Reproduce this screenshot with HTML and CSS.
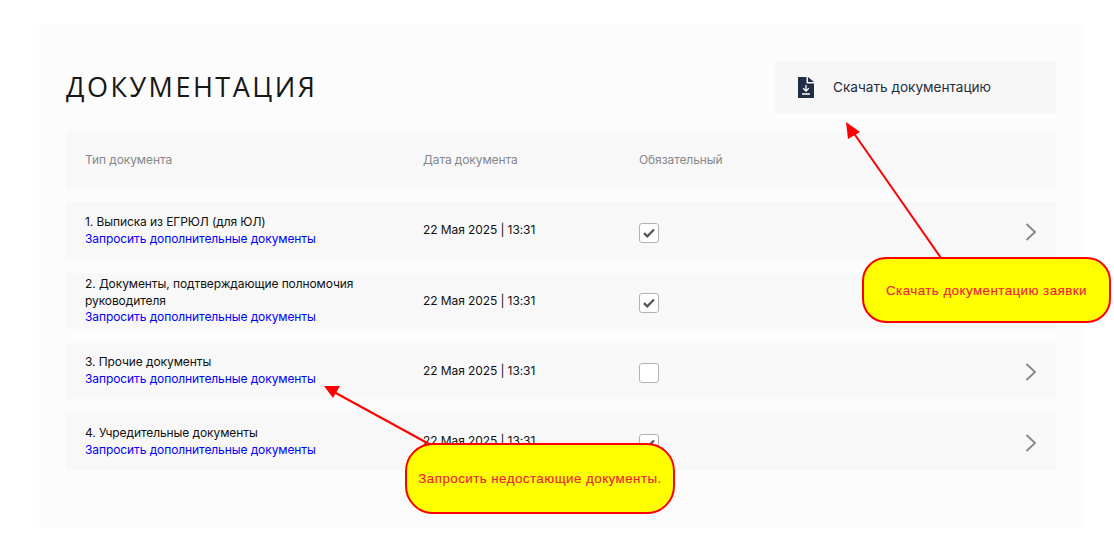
FILE: index.html
```html
<!DOCTYPE html>
<html lang="ru">
<head>
<meta charset="utf-8">
<title>Документация</title>
<link rel="stylesheet" href="styles.css">
</head>
<body>
<main class="panel">
  <header class="head">
    <h1 class="title">ДОКУМЕНТАЦИЯ</h1>
    <button class="download" type="button">
      <svg class="file-icon" width="16" height="21" viewBox="0 0 16 21"><path fill="#1f2d45" d="M0 0h8.500v6.500H16V21H0z"/><path fill="#1f2d45" d="M10 0 16 5H10z"/><path fill="none" stroke="#fff" stroke-width="1.300" d="M8 8v5.800M5.200 11.300 8 14.100l2.800-2.800M4 17h8"/></svg>
      <span>Скачать документацию</span>
    </button>
  </header>

  <div class="row row-head">
    <div class="c-type">Тип документа</div>
    <div class="c-date">Дата документа</div>
    <div class="c-req">Обязательный</div>
  </div>

  <div class="row row-1">
    <div class="c-type"><div>1. Выписка из ЕГРЮЛ (для ЮЛ)</div><a class="req-link" href="#">Запросить дополнительные документы</a></div>
    <div class="c-date">22 Мая 2025 | 13:31</div>
    <div class="c-req"><span class="box"><svg width="12" height="10" viewBox="0 0 12 10"><path fill="none" stroke="#555" stroke-width="2.300" d="M1 5.200 4.300 8.300 11 1.500"/></svg></span></div>
    <svg class="chev" width="12" height="18" viewBox="0 0 12 18"><path fill="none" stroke="#868686" stroke-width="1.800" d="M1.500 1 10 9 1.500 17"/></svg>
  </div>

  <div class="row row-2">
    <div class="c-type"><div>2. Документы, подтверждающие полномочия<br>руководителя</div><a class="req-link" href="#">Запросить дополнительные документы</a></div>
    <div class="c-date">22 Мая 2025 | 13:31</div>
    <div class="c-req"><span class="box"><svg width="12" height="10" viewBox="0 0 12 10"><path fill="none" stroke="#555" stroke-width="2.300" d="M1 5.200 4.300 8.300 11 1.500"/></svg></span></div>
  </div>

  <div class="row row-3">
    <div class="c-type"><div>3. Прочие документы</div><a class="req-link" href="#">Запросить дополнительные документы</a></div>
    <div class="c-date">22 Мая 2025 | 13:31</div>
    <div class="c-req"><span class="box"></span></div>
    <svg class="chev chev-short" width="12" height="18" viewBox="0 0 12 18"><path fill="none" stroke="#868686" stroke-width="1.800" d="M1.500 1 10 9 1.500 17"/></svg>
  </div>

  <div class="row row-4">
    <div class="c-type"><div>4. Учредительные документы</div><a class="req-link" href="#">Запросить дополнительные документы</a></div>
    <div class="c-date">22 Мая 2025 | 13:31</div>
    <div class="c-req"><span class="box"><svg width="12" height="10" viewBox="0 0 12 10"><path fill="none" stroke="#555" stroke-width="2.300" d="M1 5.200 4.300 8.300 11 1.500"/></svg></span></div>
    <svg class="chev" width="12" height="18" viewBox="0 0 12 18"><path fill="none" stroke="#868686" stroke-width="1.800" d="M1.500 1 10 9 1.500 17"/></svg>
  </div>
</main>

<svg class="arrows" width="1114" height="538" viewBox="0 0 1114 538">
  <path fill="none" stroke="#f00" stroke-width="2" d="M941 258 853 132"/>
  <path fill="#f00" d="M846 122 860 132 848 139z"/>
  <path fill="none" stroke="#f00" stroke-width="2" d="M440 450 334 392"/>
  <path fill="#f00" d="M324 386 340 386 333 398z"/>
</svg>
<div class="callout callout-download">Скачать документацию заявки</div>
<div class="callout callout-request">Запросить недостающие документы.</div>
</body>
</html>
```
FILE: styles.css
```css
* { box-sizing: border-box; }
html, body { margin: 0; padding: 0; background: #fff; }
body {
  width: 1114px;
  height: 538px;
  position: relative;
  overflow: hidden;
  font-family: Inter, "Liberation Sans", sans-serif;
  font-size: 12px;
  line-height: 16.700px;
  letter-spacing: -0.090px;
  color: #111;
}
.panel {
  margin: 25px 0 0 39px;
  width: 1044px;
  height: 503px;
  padding: 36px 27px 0;
  background: #fcfcfc;
}
.head {
  display: flex;
  justify-content: space-between;
  align-items: center;
  height: 52px;
  margin-bottom: 19px;
}
.title {
  margin: 0;
  font-family: "Open Sans", Lato, sans-serif;
  font-size: 27px;
  font-weight: 400;
  letter-spacing: 2.500px;
  line-height: 52px;
  color: #171717;
}
.download {
  display: flex;
  align-items: center;
  gap: 19px;
  width: 281px;
  height: 52px;
  padding: 0 0 0 23px;
  border: 0;
  background: #f7f7f7;
  font-family: inherit;
  font-size: 13.600px;
  letter-spacing: 0;
  color: #1f2d3d;
}
.file-icon { flex: none; }
.row {
  display: flex;
  align-items: center;
  position: relative;
  height: 56px;
  margin-bottom: 14px;
  padding-left: 19px;
  background: #f8f8f8;
}
.row-head { height: 57px; margin-bottom: 13px; color: #84878c; }
.row-1 { height: 57px; }
.row-4 { height: 57px; }
.c-type { width: 338px; flex: none; }
.c-date { width: 216px; flex: none; }
.c-req { flex: none; }
.req-link { color: #00f; text-decoration: none; display: block; }
.box {
  display: flex;
  align-items: center;
  justify-content: center;
  width: 20px;
  height: 20px;
  border: 1px solid #aeb2b8;
  border-radius: 3px;
  background: #fff;
  position: relative;
  top: 2px;
}
.chev { position: absolute; right: 19px; top: 21px; }
.chev-short { top: 20px; }
.arrows { position: absolute; left: 0; top: 0; pointer-events: none; }
.callout {
  position: absolute;
  display: flex;
  align-items: center;
  justify-content: center;
  border: 2px solid #f00;
  border-radius: 24px;
  background: #ff0;
  color: #f01f3c;
  font-family: "Liberation Sans", Arial, sans-serif;
  font-size: 13.330px;
  letter-spacing: 0.460px;
  line-height: 17px;
  -webkit-text-stroke: 0.150px #f01f3c;
}
.callout-download { left: 862px; top: 257px; width: 249px; height: 66px; }
.callout-request { left: 405px; top: 443px; width: 270px; height: 71px; border-radius: 28px; }
```
